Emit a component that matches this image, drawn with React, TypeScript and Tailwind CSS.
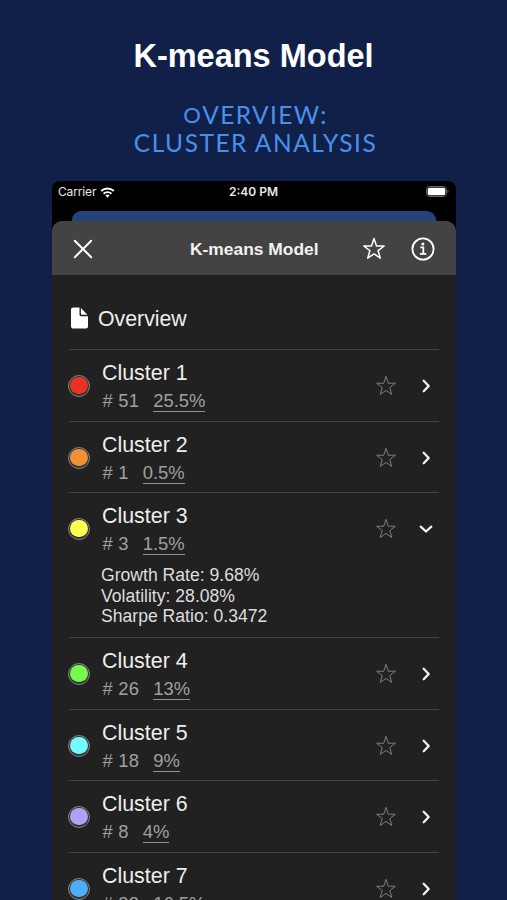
type Cluster = {
    name: string
    count: number
    share: string
    color: string
    height: string
    stats?: string[]
}

const clusters: Cluster[] = [
    { name: "Cluster 1", count: 51, share: "25.5%", color: "bg-[#eb3323]", height: "h-[72px]" },
    { name: "Cluster 2", count: 1, share: "0.5%", color: "bg-[#f19037]", height: "h-[71px]" },
    {
        name: "Cluster 3",
        count: 3,
        share: "1.5%",
        color: "bg-[#fffd54]",
        height: "h-[145px]",
        stats: ["Growth Rate: 9.68%", "Volatility: 28.08%", "Sharpe Ratio: 0.3472"],
    },
    { name: "Cluster 4", count: 26, share: "13%", color: "bg-[#75fb4c]", height: "h-[72px]" },
    { name: "Cluster 5", count: 18, share: "9%", color: "bg-[#75fbfd]", height: "h-[71px]" },
    { name: "Cluster 6", count: 8, share: "4%", color: "bg-[#b1a0f8]", height: "h-[72px]" },
    { name: "Cluster 7", count: 33, share: "16.5%", color: "bg-[#4fadf8]", height: "h-[72px]" },
]

function Star({ className }: { className: string }) {
    return (
        <svg viewBox="0 0 24 24" fill="none" stroke="currentColor" className={className}>
            <path d="M12 1.5 14.5 9h7.7l-6.1 4.7 2.2 7.4L12 16.8l-6.3 4.3 2.2-7.4L1.8 9h7.7z" strokeLinejoin="round" />
        </svg>
    )
}

function Chevron({ open }: { open: boolean }) {
    return (
        <svg viewBox="0 0 16 16" fill="none" stroke="#f4f4f4" strokeWidth="2.3" className="h-4 w-4">
            <path
                d={open ? "M2.7 5.7 8 10.5l5.3-4.8" : "M5.7 2.8 10.7 8l-5 5.2"}
                strokeLinecap="round"
                strokeLinejoin="round"
            />
        </svg>
    )
}

function StatusBar() {
    return (
        <div className="flex h-[30px] shrink-0 items-start justify-between pl-[6px] pr-[7px] pt-[3px] font-['Inter',sans-serif] text-[12px] leading-4 text-[#e8e8e8]">
            <div className="flex w-[120px] items-center gap-[4px]">
                <span className="tracking-[-0.15px]">Carrier</span>
                <svg viewBox="0 0 16 12" fill="none" stroke="white" className="h-[11px] w-[15px]">
                    <path d="M1.1 4.4a10 10 0 0 1 13.8 0" strokeWidth="2.2" />
                    <path d="M3.7 7.3a6.2 6.2 0 0 1 8.6 0" strokeWidth="2.1" />
                    <path d="M8 11.8 5.7 9.3a3.4 3.4 0 0 1 4.6 0z" fill="white" stroke="none" />
                </svg>
            </div>
            <span className="font-semibold">2:40 PM</span>
            <div className="flex w-[120px] items-center justify-end pt-[2px]">
                <svg viewBox="0 0 24 12" className="h-3 w-6">
                    <rect x="1.5" y="0.5" width="20" height="10" rx="3" fill="none" stroke="#686868" />
                    <rect x="2.7" y="1.7" width="17.6" height="7.6" rx="1.7" fill="white" />
                    <path d="M22.6 3.8c1.3.7 1.3 2.7 0 3.4z" fill="#777" />
                </svg>
            </div>
        </div>
    )
}

function SheetHeader() {
    return (
        <div className="grid h-[54px] shrink-0 grid-cols-[138px_130px_1fr] items-center rounded-t-[10px] bg-[#434343] text-white">
            <svg viewBox="0 0 20 20" stroke="currentColor" strokeWidth="2" className="ml-[21px] mt-[2px] h-5 w-5">
                <path d="m1.8 1.8 16.4 16.4M18.2 1.8 1.8 18.2" strokeLinecap="round" />
            </svg>
            <h2 className="mt-[2px] whitespace-nowrap text-[17.4px] font-bold text-[#f2f2f2]">K-means Model</h2>
            <div className="flex items-center gap-[25px] pl-[42px]">
                <Star className="mt-[1px] h-6 w-6 stroke-[1.5]" />
                <svg viewBox="0 0 24 24" fill="none" stroke="currentColor" strokeWidth="1.8" className="mt-[1px] h-6 w-6">
                    <circle cx="12" cy="12" r="10.6" />
                    <path d="M9.3 10.3h3v6.3M8.9 16.9h6.4" />
                    <circle cx="11.9" cy="7" r="1.5" fill="currentColor" stroke="none" />
                </svg>
            </div>
        </div>
    )
}

function ClusterRow({ cluster }: { cluster: Cluster }) {
    return (
        <li className={`shrink-0 border-t border-[#424242] ${cluster.height}`}>
            <div className="flex h-[71px] items-center">
                <span className="-ml-px flex h-[22px] w-[22px] items-center justify-center rounded-full border border-[#858585] bg-[#303030]">
                    <span className={`h-[17.5px] w-[17.5px] rounded-full ${cluster.color}`} />
                </span>
                <div className="ml-3 flex-1 pt-px">
                    <div className="text-[21.4px] leading-[26px] text-[#eeeeee]">{cluster.name}</div>
                    <div className="mt-[2px] flex gap-[14px] pl-[0.6px] text-[18.4px] leading-[25px] text-[#a0a0a0]">
                        <span className="tracking-[0.2px]"># {cluster.count}</span>
                        <span className="h-[24px] border-b border-[#929292]">{cluster.share}</span>
                    </div>
                </div>
                <Star className="h-[22px] w-[22px] stroke-1 text-[#858585]" />
                <span className="ml-[21px] mr-[5px]">
                    <Chevron open={Boolean(cluster.stats)} />
                </span>
            </div>
            {cluster.stats && (
                <div className="pl-8 pt-px text-[17.6px] leading-[20.5px] text-[#dedede]">
                    {cluster.stats.map((stat) => (
                        <p key={stat}>{stat}</p>
                    ))}
                </div>
            )}
        </li>
    )
}

export default function App() {
    return (
        <main className="flex h-[900px] w-[507px] flex-col overflow-hidden bg-[#112048] font-['Liberation_Sans',Arial,sans-serif]">
            <header className="flex h-[181px] shrink-0 flex-col items-center text-center">
                <h1 className="mt-[36px] text-[32.5px] font-bold leading-10 text-white">K-means Model</h1>
                <p className="mt-[25px] whitespace-nowrap pl-1 font-['Herculanum','Lato',sans-serif] text-[24.5px] text-[#4791ed]">
                    <span className="block h-[28px] leading-7 tracking-[1.4px]">
                        <span className="align-[1px] text-[22px] leading-none">O</span>VERVIEW:
                    </span>
                    <span className="block h-[28px] leading-7 tracking-[1.5px]">CLUSTER ANALYSIS</span>
                </p>
            </header>
            <section className="ml-[52px] flex w-[404px] flex-1 flex-col overflow-hidden rounded-t-[8px] bg-black">
                <StatusBar />
                <div className="mx-5 h-[10px] shrink-0 rounded-t-[9px] bg-[#24427b]" />
                <div className="flex flex-1 flex-col rounded-t-[10px] bg-[#212121]">
                    <SheetHeader />
                    <div className="px-[17px]">
                        <div className="flex h-[74px] items-center gap-[10px] pl-[2px] pt-[12px] text-[21.3px] text-[#eeeeee]">
                            <svg viewBox="0 0 17 22" fill="white" className="h-[22px] w-[17px]">
                                <path d="M2.5.5h6v7c0 1.1.7 1.8 1.8 1.8H17v10c0 1.5-.8 2.2-2.3 2.2H2.5C1 21.5 0 20.7 0 19.2V2.8C0 1.3 1 .5 2.5.5z" />
                                <path d="m9.9 1 6.5 6.8h-5.2c-.9 0-1.3-.4-1.3-1.3z" />
                            </svg>
                            <span className="pt-[3px]">Overview</span>
                        </div>
                        <ul className="flex flex-col">
                            {clusters.map((cluster) => (
                                <ClusterRow key={cluster.name} cluster={cluster} />
                            ))}
                        </ul>
                    </div>
                </div>
            </section>
        </main>
    )
}
